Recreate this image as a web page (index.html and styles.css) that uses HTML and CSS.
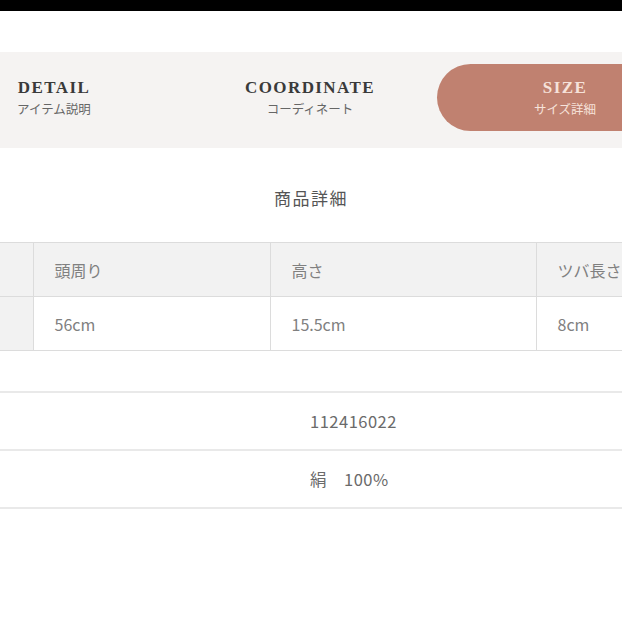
FILE: index.html
```html
<!DOCTYPE html>
<html lang="ja">
<head>
<meta charset="utf-8">
<link rel="stylesheet" href="styles.css">
</head>
<body>
<div class="topbar"></div>
<nav class="tabs">
  <div class="tab tab-detail">
    <span class="tab-en">DETAIL</span>
    <span class="tab-ja">アイテム説明</span>
  </div>
  <div class="tab tab-coord">
    <span class="tab-en">COORDINATE</span>
    <span class="tab-ja">コーディネート</span>
  </div>
  <div class="tab tab-size">
    <span class="tab-en">SIZE</span>
    <span class="tab-ja">サイズ詳細</span>
  </div>
</nav>
<h2 class="heading">商品詳細</h2>
<div class="size-wrap">
  <table class="size-table">
    <colgroup><col class="c1"><col class="c2"><col class="c3"><col class="c4"></colgroup>
    <tr class="head"><td class="first"></td><td>頭周り</td><td>高さ</td><td>ツバ長さ</td></tr>
    <tr><td class="first"></td><td>56cm</td><td>15.5cm</td><td>8cm</td></tr>
  </table>
</div>
<div class="spec">
  <div class="spec-row"><span class="spec-val">112416022</span></div>
  <div class="spec-row"><span class="spec-val">絹　100%</span></div>
</div>
</body>
</html>
```
FILE: styles.css
```css
html, body {
  margin: 0;
  padding: 0;
  background: #fff;
  overflow: hidden;
  font-family: "Noto Sans CJK JP", "Noto Sans", sans-serif;
}
.topbar {
  height: 11px;
  background: #000;
  margin-bottom: 41px;
}
.tabs {
  display: grid;
  grid-template-columns: 108px 329px 185px;
  height: 96px;
  background: #f5f3f2;
  box-sizing: border-box;
  padding-top: 12px;
  padding-bottom: 17px;
}
.tab {
  display: flex;
  flex-direction: column;
  align-items: center;
  justify-content: center;
}
.tab-coord {
  padding-left: 75px;
}
.tab-size {
  background: #c08170;
  border-radius: 34px 0 0 34px;
  padding-left: 71px;
}
.tab-en {
  font-family: "Liberation Serif", "DejaVu Serif", serif;
  font-weight: bold;
  font-size: 17px;
  letter-spacing: 1.4px;
  color: #3a3a3a;
  line-height: 20px;
}
.tab-ja {
  font-size: 12.5px;
  color: #666;
  line-height: 18px;
  margin-top: 2px;
}
.tab-size .tab-en { color: #f6e2da; }
.tab-size .tab-ja { color: #f6e2da; }
.heading {
  margin: 38px 0 32px;
  font-weight: normal;
  text-align: center;
  font-size: 17px;
  letter-spacing: 1.5px;
  line-height: 24px;
  color: #555;
}
.size-wrap {
  overflow: hidden;
  width: 622px;
}
.size-table {
  border-collapse: collapse;
  table-layout: fixed;
  width: 760px;
  color: #808080;
  font-size: 16px;
}
.c1 { width: 33px; }
.c2 { width: 237px; }
.c3 { width: 266px; }
.c4 { width: 224px; }
.size-table td {
  border: 1px solid #dcdcdc;
  padding: 0 0 0 21px;
  height: 53px;
  white-space: nowrap;
}
.size-table tr.head td { background: #f2f2f2; }
.size-table td.first { background: #f2f2f2; border-left: none; }
.spec {
  margin-top: 40px;
}
.spec-row {
  height: 56px;
  border-top: 2px solid #e9e9e9;
  display: flex;
  align-items: center;
  padding-left: 310px;
  color: #6a6a6a;
  font-size: 16.5px;
  letter-spacing: 0.5px;
}
.spec-row:last-child {
  border-bottom: 2px solid #e9e9e9;
}
```
